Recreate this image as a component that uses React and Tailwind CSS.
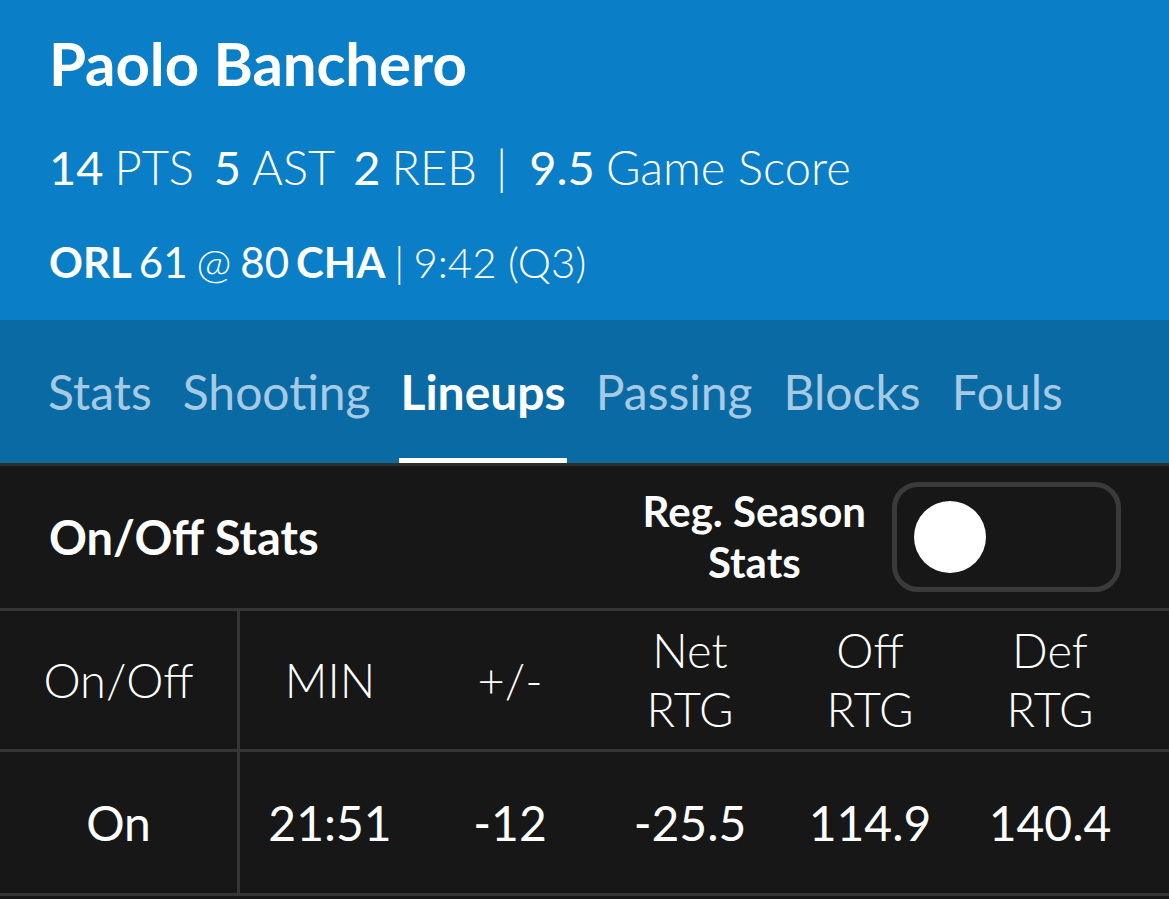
import { useState } from "react";

const tabs = ["Stats", "Shooting", "Lineups", "Passing", "Blocks", "Fouls"];

const columns = [
  { label: ["On/Off"] },
  { label: ["MIN"] },
  { label: ["+/-"] },
  { label: ["Net", "RTG"] },
  { label: ["Off", "RTG"] },
  { label: ["Def", "RTG"] },
];

const rows = [["On", "21:51", "-12", "-25.5", "114.9", "140.4"]];

function StatLine() {
  return (
    <div className="flex h-[82px] items-center text-[47px] font-light">
      <span className="font-normal">14</span>
      <span className="ml-[11px]">PTS</span>
      <span className="ml-[20px] font-normal">5</span>
      <span className="ml-[11px]">AST</span>
      <span className="ml-[18px] font-normal">2</span>
      <span className="ml-[11px]">REB</span>
      <span className="ml-[19px] mr-[22px]">|</span>
      <span className="font-normal">9.5</span>
      <span className="ml-[11px]">Game Score</span>
    </div>
  );
}

export default function App() {
  const [active, setActive] = useState("Lineups");
  const [regSeason, setRegSeason] = useState(false);

  return (
    <div className="min-h-[899px] w-[1169px] bg-[#171717] font-['Lato',sans-serif] text-white">
      <header className="bg-[#0a7fc7] pb-[4px] pl-[49px]">
        <div className="flex h-[126px] items-center">
          <h1 className="text-[60px] font-bold tracking-[-0.1px]">Paolo Banchero</h1>
        </div>
        <StatLine />
        <div className="flex h-[108px] items-center text-[42px] font-light">
          <span className="font-bold">ORL</span>
          <span className="ml-[7px] font-normal">61</span>
          <span className="ml-[9px]">@</span>
          <span className="ml-[9px] font-normal">80</span>
          <span className="ml-[7px] font-bold">CHA</span>
          <span className="mx-[9px]">|</span>
          <span>9:42 (Q3)</span>
        </div>
      </header>

      <nav className="flex h-[146px] gap-[27px] border-b-[3px] border-[#2e2e2e] bg-[#0a6aa4] pl-[46px]">
        {tabs.map((tab) => (
          <button
            key={tab}
            type="button"
            onClick={() => setActive(tab)}
            className={
              tab === active
                ? "flex items-center border-y-[5px] border-t-transparent border-b-white px-[1px] text-[48px] font-bold text-white"
                : "flex items-center border-y-[5px] border-transparent px-[2px] text-[48px] font-normal text-[#a6cae4]"
            }
          >
            {tab}
          </button>
        ))}
      </nav>

      <section className="flex h-[145px] items-center border-b-[3px] border-[#353535] pl-[49px] pr-[48px]">
        <h2 className="flex-1 text-[47px] font-bold">On/Off Stats</h2>
        <div className="text-center text-[42px] leading-[51px] font-bold">
          <div>Reg. Season</div>
          <div>Stats</div>
        </div>
        <button
          type="button"
          onClick={() => setRegSeason(!regSeason)}
          className="ml-[26px] flex h-[110px] w-[229px] items-center rounded-[26px] border-[5px] border-[#3a3a3a] px-[17px]"
        >
          <span
            className={
              regSeason
                ? "ml-auto h-[72px] w-[72px] rounded-full bg-white"
                : "h-[72px] w-[72px] rounded-full bg-white"
            }
          />
        </button>
      </section>

      <div className="grid grid-cols-[240px_repeat(5,180px)] border-b-[3px] border-[#353535]">
        {columns.map((col, i) => (
          <div
            key={col.label.join(" ")}
            className={
              i === 0
                ? "flex h-[138px] flex-col items-center justify-center border-r-[3px] border-[#353535] text-[47px] leading-[59px] font-light"
                : "flex h-[138px] flex-col items-center justify-center text-[47px] leading-[59px] font-light"
            }
          >
            {col.label.map((line) => (
              <span key={line}>{line}</span>
            ))}
          </div>
        ))}
      </div>
      {rows.map((row) => (
        <div
          key={row[0]}
          className="grid grid-cols-[240px_repeat(5,180px)] border-b-[3px] border-[#353535]"
        >
          {row.map((value, i) => (
            <div
              key={i}
              className={
                i === 0
                  ? "flex h-[141px] items-center justify-center border-r-[3px] border-[#353535] text-[48px] font-normal"
                  : "flex h-[141px] items-center justify-center text-[48px] font-normal"
              }
            >
              {value}
            </div>
          ))}
        </div>
      ))}
    </div>
  );
}
